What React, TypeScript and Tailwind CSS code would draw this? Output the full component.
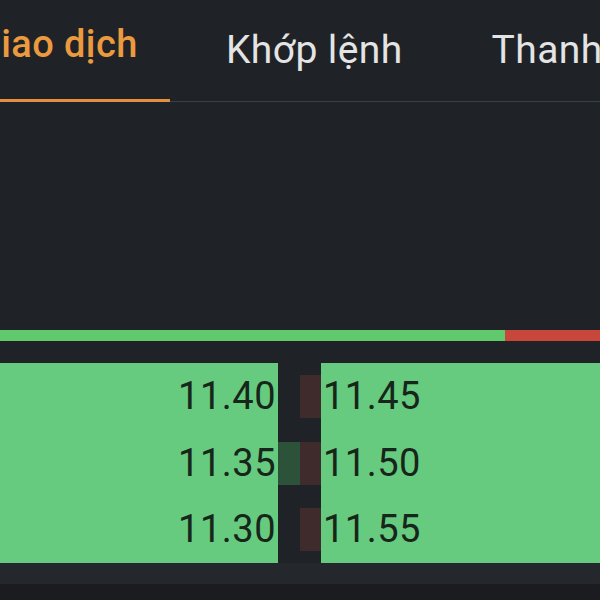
const asks = ["11.45", "11.50", "11.55"];
const bids = ["11.40", "11.35", "11.30"];
const bidMarks = [false, true, false];

export default function App() {
  return (
    <div className="w-[600px] h-[600px] overflow-hidden bg-[#1f2327] flex flex-col font-['Roboto',sans-serif]">
      <div className="relative h-[102px] flex border-b border-[#3a3f44]">
        <div className="w-[170px] shrink-0 h-full relative flex items-start pt-[22px]">
          <span className="-ml-[25px] text-[38px] leading-[44px] tracking-[0.4px] text-[#ec9a3f] font-medium whitespace-nowrap">Giao dịch</span>
          <div className="absolute left-0 right-0 -bottom-px h-[3px] bg-[#e48f3d]" />
        </div>
        <div className="shrink-0 pl-[56px] pt-[28px]">
          <span className="text-[39px] leading-[44px] tracking-[0.4px] text-[#e4e4e4] whitespace-nowrap">Khớp lệnh</span>
        </div>
        <div className="shrink-0 pl-[89px] pt-[28px]">
          <span className="text-[39px] leading-[44px] tracking-[0.4px] text-[#e4e4e4] whitespace-nowrap">Thanh khoản</span>
        </div>
      </div>

      <div className="h-[228px]" />

      <div className="flex h-[11px]">
        <div className="w-[505px] bg-[#60c96c]" />
        <div className="flex-1 bg-[#c8473d]" />
      </div>

      <div className="h-[22px]" />

      <div className="flex h-[200px]">
        <div className="w-[278px] bg-[#66cb7e] flex flex-col">
          {bids.map((p) => (
            <div key={p} className="flex-1 flex items-center justify-end pr-[2px] text-[38px] text-[#17251b] tracking-[0.5px]">
              {p}
            </div>
          ))}
        </div>
        <div className="w-[43px] flex flex-col">
          {asks.map((p, i) => (
            <div key={p} className="flex-1 flex items-center">
              <div className={"w-[22px] h-[43px] " + (bidMarks[i] ? "bg-[#2c523a]" : "")} />
              <div className="w-[21px] h-[43px] bg-[#3f2b2c]" />
            </div>
          ))}
        </div>
        <div className="flex-1 bg-[#66cb7e] flex flex-col">
          {asks.map((p) => (
            <div key={p} className="flex-1 flex items-center pl-[2px] text-[38px] text-[#17251b] tracking-[0.5px]">
              {p}
            </div>
          ))}
        </div>
      </div>

      <div className="h-[21px] bg-[#24272c]" />
      <div className="flex-1 bg-[#1a1c1f]" />
    </div>
  );
}
